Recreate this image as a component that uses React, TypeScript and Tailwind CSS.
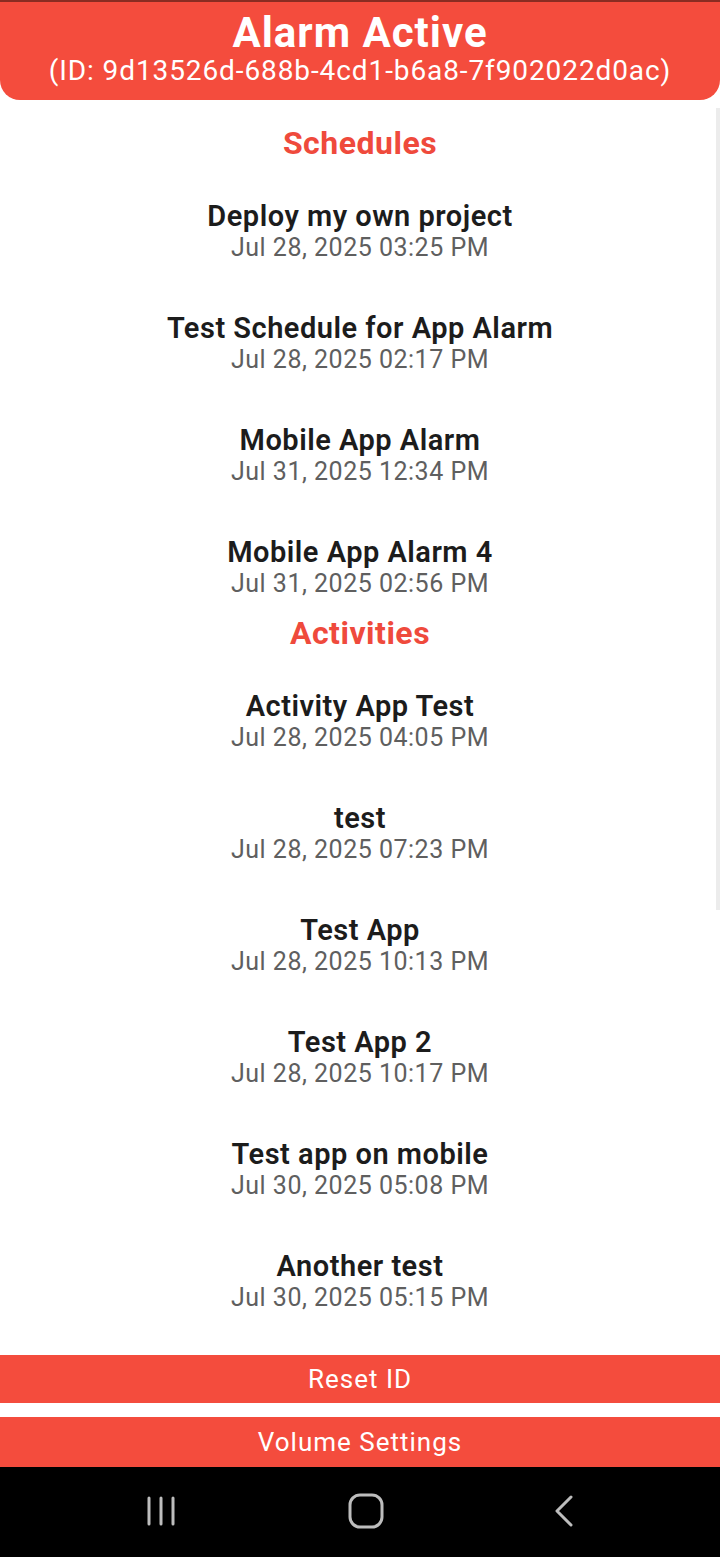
import React from 'react';

const schedules = [
  { title: 'Deploy my own project', date: 'Jul 28, 2025 03:25 PM' },
  { title: 'Test Schedule for App Alarm', date: 'Jul 28, 2025 02:17 PM' },
  { title: 'Mobile App Alarm', date: 'Jul 31, 2025 12:34 PM' },
  { title: 'Mobile App Alarm 4', date: 'Jul 31, 2025 02:56 PM' },
];

const activities = [
  { title: 'Activity App Test', date: 'Jul 28, 2025 04:05 PM' },
  { title: 'test', date: 'Jul 28, 2025 07:23 PM' },
  { title: 'Test App', date: 'Jul 28, 2025 10:13 PM' },
  { title: 'Test App 2', date: 'Jul 28, 2025 10:17 PM' },
  { title: 'Test app on mobile', date: 'Jul 30, 2025 05:08 PM' },
  { title: 'Another test', date: 'Jul 30, 2025 05:15 PM' },
];

function Item({ title, date }: { title: string; date: string }) {
  return (
    <div className="flex flex-col items-center pt-[39px] pb-[9px]">
      <p className="text-[29px] leading-[32px] font-semibold tracking-[0.5px] text-[#1c1c1c]">{title}</p>
      <p className="text-[25px] leading-[32px] tracking-[0.5px] text-[#5f5f5f]">{date}</p>
    </div>
  );
}

function SectionTitle({ children, className = '' }: { children: React.ReactNode; className?: string }) {
  return (
    <h2 className={`text-center text-[32px] leading-[36px] font-bold tracking-[0.5px] text-[#ef4a3c] ${className}`}>
      {children}
    </h2>
  );
}

export default function App() {
  return (
    <div className="h-[1557px] w-[720px] flex flex-col bg-white font-['Roboto',sans-serif] overflow-hidden">
      {/* Header */}
      <div className="border-t-2 border-[#8a2c22] bg-[#f44c3d] rounded-b-[20px] h-[100px] flex flex-col items-center justify-center text-white">
        <h1 className="text-[42px] leading-[44px] font-bold tracking-[1px]">Alarm Active</h1>
        <p className="text-[28px] leading-[32px] tracking-[0.9px] pb-[4px]">(ID: 9d13526d-688b-4cd1-b6a8-7f902022d0ac)</p>
      </div>

      {/* List */}
      <div className="relative flex-1 overflow-hidden">
        <div className="pt-[25px]">
          <SectionTitle>Schedules</SectionTitle>
          {schedules.map((s) => (
            <Item key={s.title} {...s} />
          ))}
          <SectionTitle className="mt-[6px]">Activities</SectionTitle>
          {activities.map((a) => (
            <Item key={a.title} {...a} />
          ))}
        </div>
        {/* scroll indicator */}
        <div className="absolute right-0 top-[8px] w-[4px] h-[802px] bg-[#ececec]" />
      </div>

      {/* Buttons */}
      <div className="flex flex-col">
        <button className="h-[48px] bg-[#f44c3d] text-white text-[26px] tracking-[1px]">Reset ID</button>
        <div className="h-[14px]" />
        <button className="h-[50px] bg-[#f44c3d] text-white text-[26px] tracking-[1px]">Volume Settings</button>
      </div>

      {/* Android nav bar */}
      <div className="h-[90px] bg-black flex items-center justify-center">
        <div className="flex w-[430px] justify-between items-center -mt-[2px]">
          <svg width="34" height="32" viewBox="0 0 34 32" fill="none" stroke="#bdbdbd" strokeWidth="3" strokeLinecap="round">
            <path d="M4 3v26M16 3v26M28 3v26" />
          </svg>
          <svg width="36" height="36" viewBox="0 0 36 36" fill="none" stroke="#bdbdbd" strokeWidth="3">
            <rect x="2" y="2" width="32" height="32" rx="10" />
          </svg>
          <svg width="22" height="32" viewBox="0 0 22 32" fill="none" stroke="#bdbdbd" strokeWidth="3" strokeLinecap="round" strokeLinejoin="round">
            <path d="M18 2L4 16l14 14" />
          </svg>
        </div>
      </div>
    </div>
  );
}
